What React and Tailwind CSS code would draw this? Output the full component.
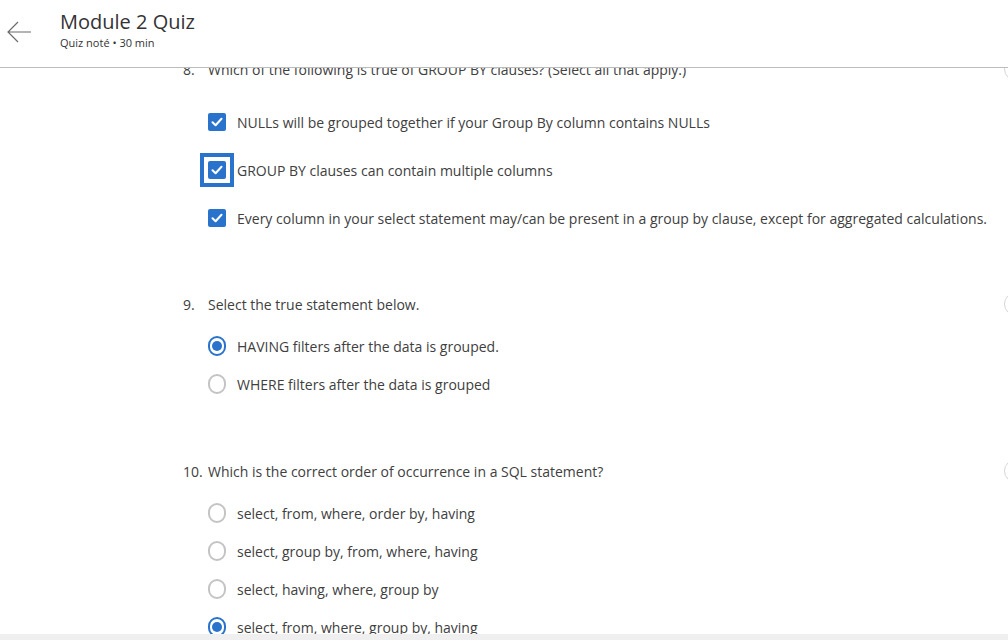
import { useState } from 'react';

const questions = [
  {
    id: 8,
    text: 'Which of the following is true of GROUP BY clauses? (Select all that apply.)',
    type: 'checkbox',
    options: [
      'NULLs will be grouped together if your Group By column contains NULLs',
      'GROUP BY clauses can contain multiple columns',
      'Every column in your select statement may/can be present in a group by clause, except for aggregated calculations.',
    ],
    selected: [0, 1, 2],
    focused: 1,
  },
  {
    id: 9,
    text: 'Select the true statement below.',
    type: 'radio',
    options: ['HAVING filters after the data is grouped.', 'WHERE filters after the data is grouped'],
    selected: [0],
  },
  {
    id: 10,
    text: 'Which is the correct order of occurrence in a SQL statement?',
    type: 'radio',
    options: [
      'select, from, where, order by, having',
      'select, group by, from, where, having',
      'select, having, where, group by',
      'select, from, where, group by, having',
    ],
    selected: [3],
  },
];

function Checkbox({ checked, focused }) {
  const box = (
    <span
      className={`flex h-[18px] w-[18px] items-center justify-center rounded-[2px] ${
        checked ? 'bg-[#2a73cc]' : 'border-2 border-[#bdbdbd] bg-white'
      }`}
    >
      {checked && (
        <svg width="14" height="14" viewBox="0 0 14 14" fill="none">
          <path d="M2.5 7.2 L5.6 10.2 L11.5 3.8" stroke="white" strokeWidth="2" strokeLinecap="round" strokeLinejoin="round" />
        </svg>
      )}
    </span>
  );
  if (!focused) return box;
  return (
    <span className="-m-[9px] flex items-center justify-center border-[4px] border-[#2a73cc] bg-white p-[4px]">
      {box}
    </span>
  );
}

function Radio({ checked }) {
  return (
    <span
      className={`flex h-[20px] w-[20px] items-center justify-center rounded-full border-2 ${
        checked ? 'border-[#2a73cc]' : 'border-[#c4c4c4]'
      }`}
    >
      {checked && <span className="h-[10px] w-[10px] rounded-full bg-[#2a73cc]" />}
    </span>
  );
}

function Question({ q, className }) {
  const [selected, setSelected] = useState(q.selected);
  const isCheck = q.type === 'checkbox';

  const toggle = (i) => {
    if (isCheck) {
      setSelected((prev) => (prev.includes(i) ? prev.filter((x) => x !== i) : [...prev, i]));
    } else {
      setSelected([i]);
    }
  };

  return (
    <div className={className}>
      <div className="flex h-5 items-center">
        <span className="w-[25px] shrink-0">{q.id}.</span>
        <span className="whitespace-nowrap">{q.text}</span>
        <span className="ml-auto h-6 w-6 shrink-0 rounded-full border border-[#d6d6d6]" />
      </div>
      <div className={`pl-[25px] ${isCheck ? 'mt-[19px]' : 'mt-[13px]'}`}>
        {q.options.map((opt, i) => (
          <div
            key={i}
            onClick={() => toggle(i)}
            className={`flex cursor-pointer items-center gap-[11px] ${isCheck ? 'h-12' : 'h-[38px]'}`}
          >
            <span className="flex w-[18px] shrink-0 items-center justify-center">
              {isCheck ? (
                <Checkbox checked={selected.includes(i)} focused={q.focused === i} />
              ) : (
                <Radio checked={selected.includes(i)} />
              )}
            </span>
            <span className="whitespace-nowrap">{opt}</span>
          </div>
        ))}
      </div>
    </div>
  );
}

export default function App() {
  return (
    <div className="flex h-[640px] w-[1008px] flex-col overflow-hidden bg-white text-[#404040] font-['Open_Sans',sans-serif]">
      <header className="z-10 flex h-[68px] shrink-0 items-start border-b border-[#bcbcbc] bg-white">
        <button type="button" className="ml-[6px] mt-[20px] text-[#6b6b6b]">
          <svg width="26" height="24" viewBox="0 0 26 24" fill="none">
            <path d="M25 12 H2 M12 2 L2 12 L12 22" stroke="currentColor" strokeWidth="1.2" />
          </svg>
        </button>
        <div className="ml-[28px] mt-[8px]">
          <h1 className="text-[20px] leading-[28px] text-[#333]">Module 2 Quiz</h1>
          <p className="text-[11px] leading-[14px] text-[#333]">Quiz noté • 30 min</p>
        </div>
      </header>

      <main className="min-h-0 flex-1 overflow-hidden text-[14px]">
        <div className="-mt-[9px] ml-[183px] w-[845px]">
          <Question q={questions[0]} />
          <Question q={questions[1]} className="mt-[52px]" />
          <Question q={questions[2]} className="mt-[58px]" />
        </div>
      </main>

      <div className="h-[6px] shrink-0 bg-[#efefef]" />
    </div>
  );
}
